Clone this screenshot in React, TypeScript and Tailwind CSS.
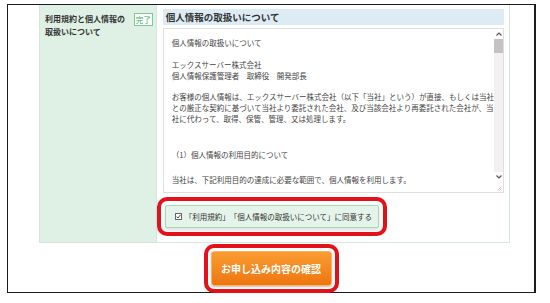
import React from "react";

const font = { fontFamily: '"Noto Sans CJK JP", "Noto Sans", sans-serif' };

function ScrollBar() {
  return (
    <div className="flex w-[9px] flex-col bg-white">
      <div className="flex h-[10px] items-center justify-center">
        <svg width="6" height="4" viewBox="0 0 6 4">
          <path d="M0.5 3.5 L3 1 L5.5 3.5" fill="none" stroke="#555" strokeWidth="1.2" />
        </svg>
      </div>
      <div className="flex-1 bg-[#f1f1f1]">
        <div className="h-[14px] w-full bg-[#c3c3c3]" />
      </div>
      <div className="flex h-[10px] items-center justify-center">
        <svg width="6" height="4" viewBox="0 0 6 4">
          <path d="M0.5 0.5 L3 3 L5.5 0.5" fill="none" stroke="#555" strokeWidth="1.2" />
        </svg>
      </div>
      <div className="flex h-[10px] items-end justify-end pb-[1px] pr-[1px]">
        <svg width="5" height="5" viewBox="0 0 5 5">
          <path d="M4.5 0.5 L0.5 4.5 M4.5 2.5 L2.5 4.5" stroke="#bbb" strokeWidth="0.8" />
        </svg>
      </div>
    </div>
  );
}

export default function App() {
  return (
    <div
      className="h-[303px] w-[550px] overflow-hidden bg-white pl-[7px] pt-[4px] [text-spacing-trim:space-all]"
      style={font}
    >
      <div className="h-[289px] w-[529px] border border-r-2 border-[#1c1c1c]">
        {/* form table */}
        <div className="ml-[31px] flex h-[238px] w-[471px] border border-t-0 border-[#d6e4db]">
          <div className="flex w-[116px] items-start justify-between bg-[#dff0e5] pl-[5px] pr-[3px] pt-[7px]">
            <p className="text-[8px] font-bold leading-[13px] text-[#333]">
              利用規約と個人情報の
              <br />
              取扱いについて
            </p>
            <span className="mt-[1px] flex h-[13px] w-[19px] items-center justify-center border border-[#7acb95] bg-white text-[7.5px] leading-none text-[#3daa5f]">
              完了
            </span>
          </div>

          <div className="flex flex-1 flex-col border-l border-[#d6e4db] bg-white pl-[6px] pr-[5px] pt-[4px]">
            <div className="flex h-[16px] items-center bg-[#dcebf4] pl-[3px] text-[9.5px] font-bold text-[#333]">
              個人情報の取扱いについて
            </div>

            <div className="mt-[3px] flex h-[165px] border border-[#dedede] bg-white">
              <div className="flex-1 overflow-hidden whitespace-nowrap pl-[8px] pt-[8px] text-[7.5px] leading-[11px] text-[#444]">
                <p>個人情報の取扱いについて</p>
                <p className="mt-[11px]">
                  エックスサーバー株式会社
                  <br />
                  個人情報保護管理者　取締役　開発部長
                </p>
                <p className="mt-[10px]">
                  お客様の個人情報は、エックスサーバー株式会社（以下「当社」という）が直接、もしくは当社
                  <br />
                  との厳正な契約に基づいて当社より委託された会社、及び当該会社より再委託された会社が、当
                  <br />
                  社に代わって、取得、保管、管理、又は処理します。
                </p>
                <p className="mt-[25px]">（1）個人情報の利用目的について</p>
                <p className="mt-[14px]">当社は、下記利用目的の達成に必要な範囲で、個人情報を利用します。</p>
              </div>
              <ScrollBar />
            </div>

            <label className="ml-[2px] mt-[12px] flex h-[23px] w-[214px] items-center rounded-[2px] border border-[#a8d9b7] bg-[#e5f4ea] pl-[9px] outline-4 outline-offset-[4px] outline-[#e2121b] shadow-[0_2px_4px_rgba(0,0,0,0.15)]">
              <span className="flex h-[7px] w-[7px] shrink-0 items-center justify-center border border-[#666] bg-white">
                <svg width="5" height="5" viewBox="0 0 5 5">
                  <path d="M0.6 2.6 L2 4 L4.5 0.8" fill="none" stroke="#333" strokeWidth="0.9" />
                </svg>
              </span>
              <span className="ml-[3px] whitespace-nowrap text-[7.5px] text-[#333]">「利用規約」「個人情報の取扱いについて」に同意する</span>
            </label>
          </div>
        </div>

        <div className="mt-[8px] flex justify-center">
          <button className="h-[35px] w-[121px] rounded-[3px] border border-[#f6b46c] bg-gradient-to-b from-[#f99c30] to-[#ee760f] text-[10px] font-bold text-white outline-4 outline-offset-[3px] outline-[#e2121b] shadow-[0_1px_2px_rgba(0,0,0,0.25)]">
            お申し込み内容の確認
          </button>
        </div>
      </div>
    </div>
  );
}
